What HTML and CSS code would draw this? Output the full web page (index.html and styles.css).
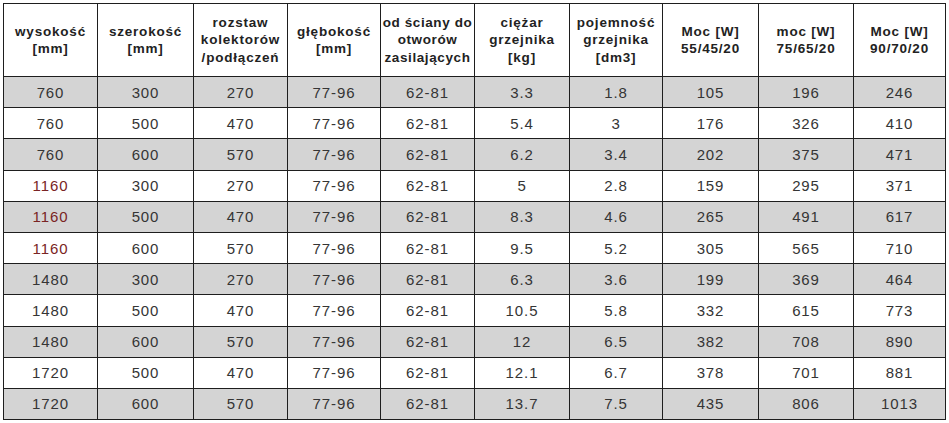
FILE: index.html
```html
<!DOCTYPE html>
<html lang="pl">
<head>
<meta charset="utf-8">
<title>Tabela grzejników</title>
<link rel="stylesheet" href="styles.css">
</head>
<body>
<table class="spec">
  <colgroup>
    <col class="c94"><col class="c96"><col class="c94"><col class="c93"><col class="c94">
    <col class="c95"><col class="c93"><col class="c96"><col class="c95"><col class="c92">
  </colgroup>
  <thead>
    <tr>
      <th>wysokość<br>[mm]</th>
      <th>szerokość<br>[mm]</th>
      <th>rozstaw<br>kolektorów<br>/podłączeń</th>
      <th>głębokość<br>[mm]</th>
      <th class="tight">od ściany do<br>otworów<br>zasilających</th>
      <th>ciężar<br>grzejnika<br>[kg]</th>
      <th>pojemność<br>grzejnika<br>[dm3]</th>
      <th>Moc [W]<br>55/45/20</th>
      <th>moc [W]<br>75/65/20</th>
      <th>Moc [W]<br>90/70/20</th>
    </tr>
  </thead>
  <tbody>
    <tr class="shade"><td>760</td><td>300</td><td>270</td><td>77-96</td><td>62-81</td><td>3.3</td><td>1.8</td><td>105</td><td>196</td><td>246</td></tr>
    <tr><td>760</td><td>500</td><td>470</td><td>77-96</td><td>62-81</td><td>5.4</td><td>3</td><td>176</td><td>326</td><td>410</td></tr>
    <tr class="shade"><td>760</td><td>600</td><td>570</td><td>77-96</td><td>62-81</td><td>6.2</td><td>3.4</td><td>202</td><td>375</td><td>471</td></tr>
    <tr><td class="red">1160</td><td>300</td><td>270</td><td>77-96</td><td>62-81</td><td>5</td><td>2.8</td><td>159</td><td>295</td><td>371</td></tr>
    <tr class="shade"><td class="red">1160</td><td>500</td><td>470</td><td>77-96</td><td>62-81</td><td>8.3</td><td>4.6</td><td>265</td><td>491</td><td>617</td></tr>
    <tr><td class="red">1160</td><td>600</td><td>570</td><td>77-96</td><td>62-81</td><td>9.5</td><td>5.2</td><td>305</td><td>565</td><td>710</td></tr>
    <tr class="shade"><td>1480</td><td>300</td><td>270</td><td>77-96</td><td>62-81</td><td>6.3</td><td>3.6</td><td>199</td><td>369</td><td>464</td></tr>
    <tr><td>1480</td><td>500</td><td>470</td><td>77-96</td><td>62-81</td><td>10.5</td><td>5.8</td><td>332</td><td>615</td><td>773</td></tr>
    <tr class="shade"><td>1480</td><td>600</td><td>570</td><td>77-96</td><td>62-81</td><td>12</td><td>6.5</td><td>382</td><td>708</td><td>890</td></tr>
    <tr><td>1720</td><td>500</td><td>470</td><td>77-96</td><td>62-81</td><td>12.1</td><td>6.7</td><td>378</td><td>701</td><td>881</td></tr>
    <tr class="shade"><td>1720</td><td>600</td><td>570</td><td>77-96</td><td>62-81</td><td>13.7</td><td>7.5</td><td>435</td><td>806</td><td>1013</td></tr>
  </tbody>
</table>
</body>
</html>
```

FILE: styles.css
```css
html, body {
  margin: 0;
  padding: 0;
  background: #ffffff;
}

body {
  padding: 3px;
  font-family: "Liberation Sans", Arial, sans-serif;
}

.spec {
  border-collapse: collapse;
  table-layout: fixed;
  width: 943px;
  color: #2e2e2e;
}

.c92 { width: 92px; }
.c93 { width: 93px; }
.c94 { width: 94px; }
.c95 { width: 95px; }
.c96 { width: 96px; }

.spec th,
.spec td {
  border: 1px solid #1e1e1e;
  text-align: center;
  vertical-align: middle;
  padding: 0;
}

.spec th {
  height: 72px;
  font-size: 13.5px;
  font-weight: bold;
  letter-spacing: 0.8px;
  line-height: 17.5px;
  color: #222222;
}

.spec th.tight {
  letter-spacing: 0.6px;
}

.spec td {
  height: 30.2px;
  font-size: 15px;
  letter-spacing: 0.9px;
  color: #353535;
}

.spec tr.shade td {
  background: #d4d4d4;
}

.spec td.red {
  color: #7a2424;
}
```
